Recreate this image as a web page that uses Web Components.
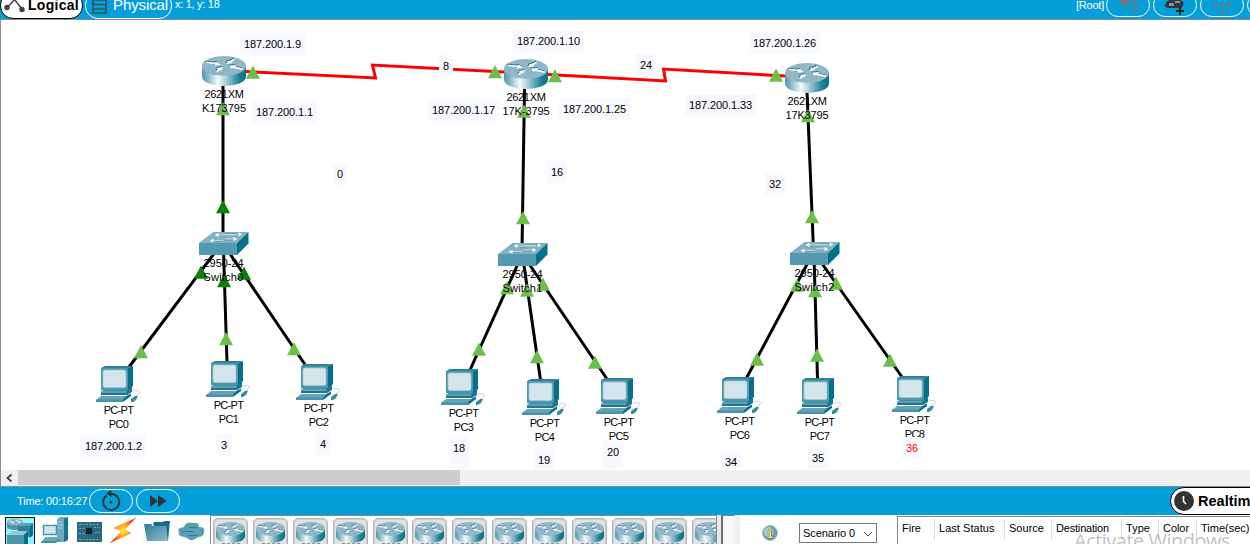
<!DOCTYPE html>
<html lang="en">
<head>
<meta charset="utf-8">
<title>Network topology</title>
<style>
html,body{margin:0;padding:0;height:100%;overflow:hidden;background:#fff}
body{font:11px/14px "Liberation Sans",Arial,sans-serif;color:#000}
</style>
</head>
<body>
<sim-app>
  <top-bar slot="top"></top-bar>
  <net-canvas slot="canvas"></net-canvas>
  <scroll-strip slot="scroll"></scroll-strip>
  <time-bar slot="time"></time-bar>
  <device-tray slot="bottom"></device-tray>
  <event-panel slot="bottom"></event-panel>
</sim-app>
<script>
class Base extends HTMLElement {
  constructor() { super(); this.attachShadow({ mode: 'open' }); }
  draw(html) { this.shadowRoot.innerHTML = html; }
}
const def = (name, html) => customElements.define(name, class extends Base {
  connectedCallback() { this.draw(html); }
});

/* A single line of text whose tracking is adjusted to a given width. */
customElements.define('fit-text', class extends Base {
  connectedCallback() {
    this.draw('<style>:host{display:inline-block;white-space:pre}span{display:inline-block}</style><span><slot></slot></span>');
    const w = +this.getAttribute('w');
    if (!w) return;
    const s = this.shadowRoot.querySelector('span');
    const natural = s.getBoundingClientRect().width;
    s.style.letterSpacing = ((w - natural) / this.textContent.length) + 'px';
  }
});

const routerSvg = `<svg width="44" height="30" viewBox="0 0 44 30"><defs><linearGradient id="g"><stop offset="0" stop-color="#4f98b0"/><stop offset=".12" stop-color="#7fb4c5"/><stop offset=".36" stop-color="#f4fafb"/><stop offset=".5" stop-color="#bcd8e0"/><stop offset=".85" stop-color="#1a7f98"/><stop offset="1" stop-color="#0b6f89"/></linearGradient></defs>
<path d="M0 10V20.500C0 33 44 33 44 20.500V10Z" fill="url(#g)"/><ellipse cx="22" cy="9.900" rx="22" ry="9.900" fill="#8fb7c7"/>
<g fill="#0a5d75" transform="translate(-.6,-.8)"><path d="M4 5.500L12 6.500L15 5.700L19 9L12 9.500L13 8.300L4 7Z"/><path d="M24 8L26 4.500L27.500 5L32 2.500L33 4L29 6.200L31 7Z"/><path d="M21 11L19.500 14.500L18 14L16 16L14 15L16 12.700L14 12Z"/><path d="M27 9.500L34 9L33 10.300L41 12.500V14L31 12L29 12.500Z"/></g>
<g fill="#fff"><path d="M4 5.500L12 6.500L15 5.700L19 9L12 9.500L13 8.300L4 7Z"/><path d="M24 8L26 4.500L27.500 5L32 2.500L33 4L29 6.200L31 7Z"/><path d="M21 11L19.500 14.500L18 14L16 16L14 15L16 12.700L14 12Z"/><path d="M27 9.500L34 9L33 10.300L41 12.500V14L31 12L29 12.500Z"/></g></svg>`;
const switchSvg = `<svg width="50" height="23" viewBox="0 0 50 23"><path d="M0 11L14.500 0H49.500L38 11Z" fill="#83b1c2"/><path d="M0 11H38V23H0Z" fill="#5299b1"/><path d="M38 11L49.500 0V11.500L38 23Z" fill="#04708a"/>
<g fill="none" stroke="#4d8ba1" stroke-width=".9"><path d="M20 3.900H29M28 1.900H39M14 9.500H23M26 7.700H36"/></g><g fill="none" stroke="#dbe9ee" stroke-width=".9"><path d="M19 3H29M28 2.600H38M14 8.700H24M26 7H35"/></g><g fill="#fff"><path d="M15.500 3L19.500 1V5ZM43.500 2.400L39.500 .5V4.300ZM10.500 8.700L14.500 6.800V10.600ZM38.500 7L34.500 5V9Z"/></g></svg>`;
const pcSvg = `<svg width="44" height="37" viewBox="0 0 44 37"><path d="M5 2L9 0H37L32 2Z" fill="#2f8199"/><path d="M32 2L37 0V20L32 25Z" fill="#04708a"/><path d="M5 2H32V24H5Z" fill="#4e96ae"/><rect x="7" y="4" width="23" height="17.500" rx="2" fill="#d3e4ea" stroke="#a5cbd7" stroke-width=".7"/>
<path d="M6 24H31L36 21V26L31 29H5V26L8 25Z" fill="#1b7690"/><path d="M6 24.500H31L30 27H5Z" fill="#5da0b6"/><path d="M5 30H31L28 34H0Z" fill="#64a4b9"/><path d="M0 33.500H27V36H0Z" fill="#4a92ab"/><path d="M31 29.500L35 27.500V30L27 36V33.500Z" fill="#066f8a"/>
<path d="M37 25C42 23.500 46 26 42 28L39 30.500" fill="none" stroke="#b4cdd6" stroke-width="1"/><path d="M35 33L39 30H42L40 34L37 36H35Z" fill="#3889a1"/></svg>`;

/* Device on the workspace: icon, model line and name line. */
customElements.define('net-node', class extends Base {
  connectedCallback() {
    const k = this.getAttribute('kind');
    const off = { router: [31, 0], switch: [24, 0], pc: [37, 1] }[k];
    this.draw(`<style>:host{position:absolute;display:block}
      .box{display:flex;flex-direction:column;align-items:center;width:${{ router: 44, switch: 50, pc: 44 }[k]}px}
      svg{display:block;flex:none;overflow:visible}
      .l{display:flex;justify-content:center;width:80px;line-height:14px;margin-left:${off[1]}px}
      .first{margin-top:${off[0] - ({ router: 30, switch: 23, pc: 37 }[k])}px}</style>
      <div class="box">${{ router: routerSvg, switch: switchSvg, pc: pcSvg }[k]}
      <div class="l first"><slot name="model"></slot></div><div class="l"><slot name="name"></slot></div></div>`);
  }
});
customElements.define('net-note', class extends Base {
  connectedCallback() {
    this.draw('<style>:host{position:absolute;display:block;box-sizing:border-box;background:#f8f8ff;padding:4px 0 0 4px;overflow:hidden;white-space:nowrap}</style><slot></slot>');
  }
});

const nodes = [
  ['router', 202, 56, '2621XM', 39, 'K173795', 44], ['router', 504, 59, '2621XM', 39, '17K-3795', 47], ['router', 785, 63, '2621XM', 39, '17K3795', 43],
  ['switch', 198.5, 232, '2950-24', 40, 'Switch0', 40], ['switch', 497.5, 243, '2950-24', 40, 'Switch1', 40], ['switch', 789.5, 242, '2950-24', 40, 'Switch2', 40],
  ...[[96, 366], [206, 361], [296, 364], [441, 369], [522, 379], [596, 378], [717, 377], [797, 378], [892, 376]].map((p, i) => ['pc', p[0], p[1], 'PC-PT', 29.5, 'PC' + i, 19.5])
];
const notes = [
  [240, 33, 65, 22, '187.200.1.9'], [252, 101, 65, 22, '187.200.1.1'], [513, 30, 71, 22, '187.200.1.10'], [428, 99, 71, 22, '187.200.1.17'],
  [559, 98, 71, 22, '187.200.1.25'], [749, 32, 71, 22, '187.200.1.26'], [685, 94, 71, 22, '187.200.1.33'], [439, 55, 14, 22, '8'], [636, 54, 20, 22, '24'],
  [333, 163, 14, 22, '0'], [547, 161, 20, 22, '16'], [765, 173, 20, 22, '32'], [81, 435, 65, 22, '187.200.1.2'], [217, 434, 14, 22, '3'], [316, 433, 14, 22, '4'],
  [449, 437, 20, 32, '18'], [534, 449, 20, 20, '19'], [603, 441, 20, 28, '20'], [721, 451, 20, 18, '34'], [808, 447, 20, 22, '35'], [902, 437, 20, 22, '36', 'red']
];
const links = [[223, 86, 223, 240], [524.5, 88, 522, 250], [807, 92, 813.5, 250],
  [219, 247, 129, 367], [223.5, 250, 227, 362], [226, 248, 306, 366],
  [522, 255, 470, 370], [522.5, 255, 540.5, 380], [523, 255, 607, 379],
  [812, 255, 746.5, 378], [814, 255, 817.5, 379], [816, 255, 902, 377]];
const up = [[253, 65.5], [223, 102], [141, 345], [226, 332], [294, 342], [495, 65], [555, 69], [524, 104.500], [523, 211], [507, 281], [527, 283.500], [543, 277.500],
  [479, 342.500], [537, 350], [595, 355.500], [776, 68.500], [808, 109], [812, 210], [797, 278.500], [815, 284], [836, 276.500], [757, 352.500], [817, 348.500], [890, 353.500]];
const upDark = [[223, 200], [201, 265.500], [244, 266.500], [224, 274]];
const tri = (c) => (p) => `<path fill="${c}" d="M${p[0]} ${p[1]}l7 13.300h-14z"/>`;

customElements.define('net-canvas', class extends Base {
  connectedCallback() {
    this.draw(`<style>:host{display:block;position:relative;overflow:hidden;background:#fff;box-shadow:inset 1px 0 #8c8c8c;height:100%}
      .map{position:absolute;left:0;top:-20px;width:1250px;height:490px}svg.l{position:absolute;left:0;top:0}</style>
      <div class="map"><svg class="l" width="1250" height="490"><g stroke="#000" stroke-width="3">${links.map(l => `<path d="M${l[0]} ${l[1]}L${l[2]} ${l[3]}"/>`).join('')}</g>
      <g stroke="#f00" stroke-width="3" fill="none"><path d="M246 71.500L375.500 78L372.500 65L504 72"/><path d="M548 74.500L665.500 81L663.500 69L785 76"/></g>
      ${up.map(tri('#6cc04a')).join('')}${upDark.map(tri('#0a820a')).join('')}</svg>
      ${nodes.map(n => `<net-node kind="${n[0]}" style="left:${n[1]}px;top:${n[2]}px"><fit-text slot="model" w="${n[4]}">${n[3]}</fit-text><fit-text slot="name" w="${n[6]}">${n[5]}</fit-text></net-node>`).join('')}
      ${notes.map(n => `<net-note style="left:${n[0]}px;top:${n[1]}px;width:${n[2]}px;height:${n[3]}px;color:${n[5] || '#000'}"><fit-text w="${n[2] - 8}">${n[4]}</fit-text></net-note>`).join('')}</div>`);
  }
});

def('sim-app', `<style>:host{display:grid;width:1250px;height:544px;grid-template-rows:20px 450px 17px 28px 29px;overflow:hidden}
  .row{min-width:0;min-height:0;overflow:hidden}.bottom{display:flex}</style>
  <div class="row"><slot name="top"></slot></div><div class="row"><slot name="canvas"></slot></div><div class="row"><slot name="scroll"></slot></div>
  <div class="row"><slot name="time"></slot></div><div class="row bottom"><slot name="bottom"></slot></div>`);

def('top-bar', `<style>:host{display:flex;height:20px;box-sizing:border-box;background:#049fd9;border-bottom:1px solid #7f8c92;color:#fff;align-items:flex-start}
  .tab{display:flex;box-sizing:border-box;height:27px;margin-top:-8px;border:1px solid #fff;border-radius:13px;align-items:center}
  .logical{width:83px;background:#fff;color:#000;border-color:#000;font:bold 14px/16px "Liberation Sans",Arial,sans-serif;padding-left:3px}
  .physical{width:87px;margin-left:2px;font-size:15px;line-height:16px;padding-left:6px}
  .tab fit-text{margin-top:-1px}
  .pos{margin:-3px 0 0 3px}.sp{flex:1}.root{margin:-2px 2px 0 0}
  .btn{box-sizing:border-box;width:44px;height:24px;margin:-7px 3px 0 0;border:1px solid #fff;border-radius:12px;flex:none}
  .btn.last{margin-right:-41px}svg{display:block;flex:none}</style>
  <div class="tab logical"><svg width="24" height="25"><g stroke="#444" stroke-width="1.500" fill="#444"><path d="M3 15L10.500 6.500L18 16" fill="none"/><circle cx="3" cy="14.500" r="2"/><circle cx="18" cy="16.500" r="2"/></g></svg><fit-text w="51">Logical</fit-text></div>
  <div class="tab physical"><svg width="21" height="25"><path d="M1 2H14V20H1ZM1 7H14M1 11.500H14M1 16H14" fill="none" stroke="#37545f" stroke-width="1.700"/></svg><fit-text w="55">Physical</fit-text></div>
  <span class="pos"><fit-text w="44.500">x: 1, y: 18</fit-text></span><span class="sp"></span><span class="root"><fit-text w="28">[Root]</fit-text></span>
  <div class="btn"><svg width="42" height="22"><path d="M18 8H25Q30 9 29.500 13.500Q29 17.500 24 18" fill="none" stroke="#75797c" stroke-width="2.200"/><path d="M11 8.500L20 4V13Z" fill="#75797c"/></svg></div>
  <div class="btn"><svg width="42" height="22"><path d="M14 14Q9 13 12 9Q14 5 18 6Q22 2 26 6Q31 7 29 12Q27 15 23 14Z" fill="#30363a"/><path d="M15 9H20V12H15ZM21 7H26V9H21Z" fill="#8a969b"/><path d="M26 13V21M22 17H30" stroke="#222" stroke-width="2"/></svg></div>
  <div class="btn"><svg width="42" height="22" fill="#75797c"><path d="M11 11L16 8V14ZM31 11L26 8V14ZM18 17H25L21.500 21ZM20 10H23V13H20Z"/></svg></div>
  <div class="btn last"></div>`);

def('scroll-strip', `<style>:host{display:flex;height:17px;box-sizing:border-box;background:#f0f0f0;border-bottom:1px solid #7f8c92;box-shadow:inset 1px 0 #8c8c8c}
  svg{display:block;width:18px;height:16px}.thumb{width:442px;height:15px;background:#cdcdcd}</style>
  <svg><path d="M11.500 4.500L7.500 8L11.500 11.500" fill="none" stroke="#444" stroke-width="1.800"/></svg><div class="thumb"></div>`);

def('time-bar', `<style>:host{display:flex;height:28px;background:#049fd9;color:#fff;align-items:center;padding-left:17px}
  .btn{box-sizing:border-box;width:44px;height:24px;border:1px solid #fff;border-radius:12px;margin-right:3px}.t{width:72px}.sp{flex:1}
  .rt{display:flex;align-items:center;box-sizing:border-box;width:100px;height:28px;margin-right:-20px;flex:none;background:#fff;border:1px solid #000;border-radius:14px;color:#000;font:bold 14.500px/18px "Liberation Sans",Arial,sans-serif;padding-left:3px;gap:4px}svg{display:block;flex:none}</style>
  <span class="t"><fit-text w="70.500">Time: 00:16:27</fit-text></span>
  <div class="btn"><svg width="42" height="22"><path d="M16.500 5.500A8 8 0 1 0 22 4H18" fill="none" stroke="#303236" stroke-width="1.900"/><path d="M16 3.500L21.500 0V7Z" fill="#303236"/><circle cx="21" cy="12" r="1.500" fill="#303236"/></svg></div>
  <div class="btn"><svg width="42" height="22"><path d="M13 5L21 11L13 17ZM21 5L29.500 11L21 17Z" fill="#303236"/></svg></div><span class="sp"></span>
  <div class="rt"><svg width="20" height="20"><circle cx="10" cy="10" r="10" fill="#333"/><path d="M9.500 5V10.500L12 13" fill="none" stroke="#fff" stroke-width="1.600"/></svg><fit-text w="52.500">Realtim</fit-text></div>`);

customElements.define('device-tile', class extends Base {
  connectedCallback() {
    this.draw(`<style>:host{display:block;box-sizing:border-box;width:35px;height:34px;flex:none;border:1px solid #b4b4b4;border-radius:5px;background:#e2e2e2;box-shadow:inset 0 0 0 1px #cfcfcf;padding:3px 0 0 2px}
      svg{display:block;width:29px;height:21px}i{display:block;width:18px;height:1px;margin:0 0 0 6px;background:repeating-linear-gradient(90deg,#999 0 3px,transparent 3px 5px)}</style>${routerSvg.replace('width="44" height="30"', 'width="29" height="21" preserveAspectRatio="none"')}<i></i>`);
  }
});

def('device-tray', `<style>:host{display:flex;width:740px;height:29px;flex:none;background:#fff;overflow:hidden}
  .kinds{width:210px;flex:none}.tiles{box-sizing:border-box;width:507px;height:29px;flex:none;border:1px solid #888;border-bottom:0;display:flex;gap:4.900px;padding:2px 0 0 2px;overflow:hidden}
  .gap{width:4px;background:#e9e9e9}.sb{box-sizing:border-box;width:14px;border-left:2px solid #6b6b6b;border-top:1px solid #888;background:repeating-conic-gradient(#eee 0 25%,#fff 0 50%) 0 0/2px 2px}.end{width:5px;background:#f0f0f0}svg{display:block}</style>
  <div class="kinds"><svg width="210" height="29"><defs><linearGradient id="b" x2="1" y2="1"><stop stop-color="#2b7f98"/><stop offset="1" stop-color="#8dbccb"/></linearGradient><radialGradient id="f"><stop stop-color="#fff22a"/><stop offset=".55" stop-color="#ff9c18"/><stop offset="1" stop-color="#ef3b24"/></radialGradient></defs>
  <rect x="5.500" y="2.500" width="29" height="32" fill="#8ff5ff" stroke="#111"/>
  <path d="M7 7v5c0 4 16 4 16 0V7z" fill="#4e96ae"/><ellipse cx="15" cy="7" rx="8" ry="3.500" fill="#8fb7c7"/><path d="M10 6l4 2m2-3l5 3" stroke="#fff"/><path d="M18 11l3-3h12l-3 3z" fill="#5ea0b5"/><path d="M18 11h12v11H18z" fill="#2f8098"/><path d="M30 11l3-3v12l-3 3z" fill="#04708a"/>
  <path d="M7 20l5-4h16l-4 4z" fill="#9ec6d2"/><path d="M7 20h17v9H7z" fill="#4e96ae"/><path d="M24 20l4-4v13h-4z" fill="#04708a"/>
  <path d="M57 4l3-2h8v23l-4 2h-7z" fill="#6ca9bc"/><path d="M64 4l4-2v23l-4 2z" fill="#14758e"/><path d="M58 7h5M58 10h5M58 13h5" stroke="#b7d5de"/><rect x="43.500" y="10.500" width="13" height="9" fill="#d3e4ea" stroke="#4e96ae" stroke-width="1.500"/><path d="M45 22h14v3l-4 3H41z" fill="#6ea8bb"/><path d="M41 27h15l4-3" stroke="#14758e" fill="none"/>
  <rect x="77" y="7" width="25" height="20" fill="#286b83"/><g stroke="#7fa9b6" fill="none" stroke-dasharray="2 1.500"><path d="M79 9.500H100M79 13.500H84M94 12.500H100M79 18.500H84M95 17.500H100M79 24.500H100"/></g><rect x="86" y="13" width="6" height="6" fill="#16242b"/>
  <path d="M136 3L114 13L122 16L110 28L131 18L124 15Z" fill="url(#f)" stroke="#f3703b" stroke-width=".5"/>
  <path d="M153 9L154 7H163L164 6H170L168 26H164Z" fill="#176f88"/><path d="M144 9H151L153 11H166L168 26H147Z" fill="url(#b)"/>
  <path d="M184 22Q177 21 179 17Q176 13 184 12Q186 6 193 8Q199 7 199 12Q206 12 204 17Q204 22 198 22Q192 28 187 23Z" fill="#5b9fb5"/><path d="M189 12.500H197M182 16.500H194M188 20.500H198" stroke="#2d7d94" fill="none"/></svg></div>
  <div class="tiles">${'<device-tile></device-tile>'.repeat(13)}</div><div class="gap"></div><div class="sb"></div><div class="end"></div>`);

def('event-panel', `<style>:host{display:flex;width:510px;height:29px;flex:none;position:relative;background:#fff;overflow:hidden}
  .info{margin:10px 0 0 22px;width:16px;height:16px;flex:none}svg{display:block;flex:none}
  .select{display:flex;box-sizing:border-box;width:78px;height:20px;margin:8px 0 0 21px;border:1px solid #777;align-items:center;padding-left:3px;flex:none}
  .table{display:flex;box-sizing:border-box;flex:none;width:353px;height:28px;margin:1px 0 0 20px;border:1px solid #828790;border-width:1px 0 0 1px;padding-top:2px}
  .c{box-sizing:border-box;height:21px;padding:2px 0 0 4px;border-right:1px solid #dcdcdc;flex:none}.c:last-child{border:0}
  .wm{position:absolute;left:334px;top:12px;font:20px/28px "Open Sans","Noto Sans",sans-serif;color:rgba(140,140,140,.55)}</style>
  <svg class="info" viewBox="0 0 16 16"><circle cx="8" cy="8" r="7.500" fill="#6c9fae" stroke="#a5b8be"/><circle cx="6.500" cy="7" r="5" fill="#a4c7cf"/><path d="M8 3V5M7 7H8.500V12.500M6.500 12.500H10" stroke="#6b6b31" stroke-width="2.400" fill="none"/><path d="M8 3V5M7 7H8.300V12.500M6.500 12.300H10" stroke="#f3ee64" stroke-width="1.400" fill="none"/></svg>
  <div class="select"><fit-text w="52">Scenario 0</fit-text><svg width="22" height="18"><path d="M9 8L13 12L17 8" fill="none" stroke="#444"/></svg></div>
  <div class="table"><div class="c" style="width:37px"><fit-text w="19">Fire</fit-text></div><div class="c" style="width:70px"><fit-text w="55.500">Last Status</fit-text></div><div class="c" style="width:47px"><fit-text w="35">Source</fit-text></div><div class="c" style="width:70px"><fit-text w="53">Destination</fit-text></div><div class="c" style="width:37px"><fit-text w="24">Type</fit-text></div><div class="c" style="width:38px"><fit-text w="26">Color</fit-text></div><div class="c"><fit-text w="48.500">Time(sec)</fit-text></div></div>
  <div class="wm"><fit-text w="156">Activate Windows</fit-text></div>`);
</script>
</body>
</html>
